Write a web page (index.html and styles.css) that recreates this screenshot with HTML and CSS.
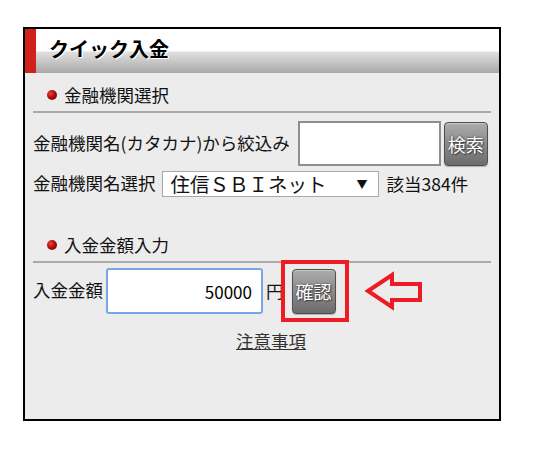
FILE: index.html
```html
<!DOCTYPE html>
<html lang="ja">
<head>
<meta charset="utf-8">
<title>クイック入金</title>
<link rel="stylesheet" href="styles.css">
</head>
<body>
<div class="page">
  <div class="panel">
    <div class="hdr"><h1>クイック入金</h1></div>
    <div class="body">
      <div class="sec-head"><span class="dot"></span>金融機関選択</div>
      <div class="row r1">
        <span class="lbl">金融機関名(カタカナ)から絞込み</span>
        <input class="txt kana" type="text">
        <button class="btn">検索</button>
      </div>
      <div class="row r2">
        <span class="lbl">金融機関名選択</span>
        <div class="select"><span>住信ＳＢＩネット</span><span class="arr">▼</span></div>
        <span class="hits">該当384件</span>
      </div>
      <div class="sec-head s2"><span class="dot"></span>入金金額入力</div>
      <div class="row r3">
        <span class="lbl">入金金額</span>
        <input class="txt amt" type="text" value="50000">
        <span class="yen">円</span>
        <button class="btn">確認</button>
      </div>
      <div class="note"><a href="#">注意事項</a></div>
    </div>
  </div>
  <div class="hl-box"></div>
  <svg class="hl-arrow" width="70" height="46" viewBox="0 0 70 46">
    <polygon points="10,23 34,7 34,16 62,16 62,32 34,32 34,39" fill="none" stroke="#ed1c24" stroke-width="4"/>
  </svg>
</div>
</body>
</html>
```
FILE: styles.css
```css
html, body {
  margin: 0;
  padding: 0;
  background: #fff;
}
body {
  font-family: "Noto Sans CJK JP", "Noto Sans", sans-serif;
  color: #111;
}
.page {
  position: relative;
  width: 549px;
  height: 462px;
  padding: 27px 0 0 23px;
  box-sizing: border-box;
}
.panel {
  width: 474px;
  height: 390px;
  border: 2px solid #000;
  background: #ececec;
}
.hdr {
  height: 44px;
  border-left: 11px solid #d0211a;
  padding-left: 13px;
  background: linear-gradient(to bottom, #fff 0, #fff 22px, #e0e0e0 23px, #a8a8a8 44px);
}
.hdr h1 {
  margin: 0;
  font-size: 20px;
  font-weight: bold;
  line-height: 39px;
  color: #000;
  text-shadow: 1px 1px 0 #fff, 1px 0 0 #fff;
}
.body {
  padding: 0 8px;
}
.sec-head {
  display: flex;
  align-items: center;
  padding: 10px 0 4px 14px;
  line-height: 24px;
  font-size: 17.5px;
  border-bottom: 2px solid #aaa;
}
.s2 {
  margin-top: 26px;
}
.dot {
  width: 10px;
  height: 10px;
  border-radius: 50%;
  margin-right: 7px;
  background: radial-gradient(circle at 35% 35%, #e8443a 0, #b00f0f 45%, #600000 100%);
}
.row {
  display: flex;
  align-items: center;
  font-size: 17.5px;
  line-height: 24px;
}
.r1 {
  margin-top: 8px;
  height: 45px;
}
.lbl {
  padding-bottom: 2px;
}
.txt {
  box-sizing: border-box;
  background: #fff;
  font-family: inherit;
  margin: 0;
  outline: none;
}
.kana {
  width: 143px;
  height: 45px;
  margin-left: 8px;
  border: 2px solid #8e8e8e;
}
.btn {
  box-sizing: border-box;
  width: 44px;
  height: 44px;
  padding: 0;
  margin-left: 3px;
  border: 1px solid #4e4e4e;
  border-radius: 4px;
  background: linear-gradient(to bottom, #acacac 0, #8a8a8a 50%, #6c6c6c 100%);
  box-shadow: inset 0 1px 0 rgba(255,255,255,0.35), 0 1px 1px rgba(0,0,0,0.25);
  color: #fff;
  font-family: inherit;
  font-size: 18px;
  line-height: 1;
  text-shadow: 0 0 2px #333, 1px 1px 1px #444;
}
.r2 {
  margin-top: 5px;
  height: 26px;
}
.select {
  box-sizing: border-box;
  width: 217px;
  height: 26px;
  margin-left: 6px;
  padding: 0 10px 0 8px;
  border: 1px solid #a9a9a9;
  background: #fff;
  display: flex;
  align-items: center;
  justify-content: space-between;
  font-size: 19.5px;
  line-height: 24px;
}
.arr {
  font-size: 11px;
  line-height: 1;
}
.hits {
  margin-left: 8px;
}
.r3 {
  margin-top: 5px;
  height: 46px;
}
.amt {
  width: 157px;
  height: 46px;
  margin-left: 3px;
  border: 2px solid #79a6e6;
  border-radius: 3px;
  padding: 0 9px 0 4px;
  text-align: right;
  font-size: 17px;
  color: #000;
}
.yen {
  margin-left: 3px;
}
.r3 .btn {
  margin-left: 8px;
  height: 45px;
}
.note {
  margin-top: 15px;
  text-align: center;
  padding-left: 18px;
  font-size: 17.5px;
  line-height: 24px;
}
.note a {
  color: #333;
  text-decoration: underline;
}
.hl-box {
  position: absolute;
  left: 281px;
  top: 260px;
  width: 68px;
  height: 62px;
  box-sizing: border-box;
  border: 4px solid #ed1c24;
}
.hl-arrow {
  position: absolute;
  left: 358px;
  top: 268px;
}
```
